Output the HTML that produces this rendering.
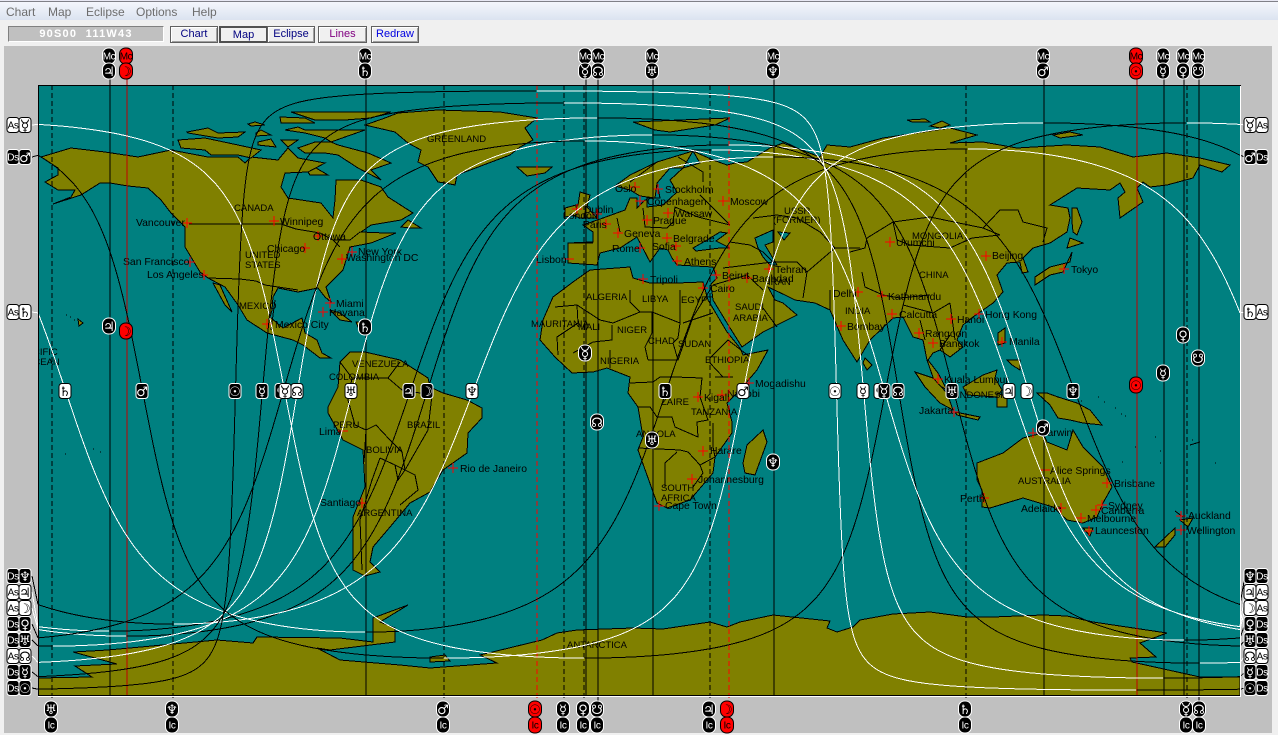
<!DOCTYPE html>
<html><head><meta charset="utf-8"><title>Map</title>
<style>
html,body{margin:0;padding:0;width:1278px;height:735px;overflow:hidden;background:#f0f0f0}
body{position:relative;font-family:"Liberation Sans",sans-serif}
#top{position:absolute;left:0;top:0;width:1278px;height:1px;background:#e8e8f4}
#top2{position:absolute;left:0;top:1px;width:1278px;height:1px;background:#808088}
#menu{position:absolute;left:0;top:2px;width:1278px;height:18px;background:linear-gradient(#f4f6fc,#dbe3f0)}
#menu span{position:absolute;top:3px;font-size:12px;color:#6d6d6d}
#coord{position:absolute;left:8px;top:26px;width:154px;height:14px;background:#c0c0c0;border:1px solid #808080;border-right-color:#fff;border-bottom-color:#fff;color:#fff;font-size:11px;font-weight:bold;line-height:14px;text-align:center;white-space:pre;letter-spacing:1.2px}
.btn{position:absolute;top:26px;height:15px;box-sizing:content-box;background:#f0f0f0;border:1px solid #606060;box-shadow:inset 1px 1px #fff,inset -1px -1px #a0a0a0;font-size:11px;line-height:15px;text-align:center;color:#000080}
#svg{position:absolute;left:0;top:0}
text{font-family:"Liberation Sans",sans-serif}
.c{font-size:10.4px;fill:#000}
.n{font-size:9.5px;fill:#000}
.land polygon{fill:#808000;stroke:#000;stroke-width:1;stroke-linejoin:miter}
.k text,.K text{fill:#fff}.w text,.W text{fill:#000}.r text{fill:#000}
.k path,.K path{stroke:#fff;fill:none}.w path,.W path,.r path{stroke:#000;fill:none}
.i text{font-family:"DejaVu Sans",sans-serif;font-size:13px;text-anchor:middle}
.i text.l{font-family:"Liberation Sans",sans-serif;font-size:10px;letter-spacing:-.4px}
.i text.p{font-size:11px}
</style></head><body>
<div id="top"></div><div id="top2"></div>
<div id="menu"><span style="left:6px">Chart</span><span style="left:48px">Map</span><span style="left:86px">Eclipse</span><span style="left:136px">Options</span><span style="left:192px">Help</span></div>
<svg id="svg" width="1278" height="735" viewBox="0 0 1278 735" xmlns="http://www.w3.org/2000/svg">
<defs>
<clipPath id="mc"><rect x="38" y="85" width="1202" height="611"/></clipPath>
<rect id="ok" x="-6.5" y="-8" width="13" height="16" rx="6" fill="#000" stroke="#fff"/>
<rect id="ow" x="-6.5" y="-8" width="13" height="16" rx="6" fill="#fff" stroke="#000"/>
<rect id="or" x="-6.5" y="-8" width="13" height="16" rx="6" fill="#f00" stroke="#000"/>
<rect id="bk" x="-6" y="-7.5" width="12" height="15" rx="3" fill="#000" stroke="#fff"/>
<rect id="bw" x="-6" y="-7.5" width="12" height="15" rx="3" fill="#fff" stroke="#000"/>
</defs>
<rect x="4" y="46" width="1268" height="687" fill="#c0c0c0"/>
<rect x="38" y="85" width="1202" height="611" fill="#008080"/>
<g clip-path="url(#mc)">
<g class="land" shape-rendering="crispEdges">
<!-- North America -->
<polygon points="41,157 71,148 105,152 138,157 171,150 208,157 238,157 245,163 251,157 278,160 288,148 298,158 325,163 308,172 285,173 281,187 288,198 321,203 333,218 335,200 336,180 361,180 381,187 388,197 413,213 401,220 371,225 361,232 385,233 396,233 371,243 350,247 343,270 331,282 326,287 331,302 325,297 318,288 298,292 278,288 273,297 272,310 270,317 283,328 302,318 305,333 317,340 322,353 331,358 320,358 303,345 293,340 267,333 247,320 238,305 225,287 208,278 200,272 185,247 185,227 171,213 161,200 148,188 128,186 110,183 100,183 81,195 53,204 71,197 75,190 58,190 45,182 58,175 58,168"/>
<polygon points="213,283 220,285 232,312 225,305"/>
<polygon points="178,140 205,138 238,145 261,150 251,158 238,155 211,155 205,150 181,148"/>
<polygon points="187,132 208,128 218,133 245,132 238,137 218,138 188,133"/>
<polygon points="248,124 255,122 265,125 251,126"/>
<polygon points="256,133 261,130 271,135 256,136"/>
<polygon points="258,142 271,139 276,147 258,145"/>
<polygon points="280,117 305,118 315,123 281,123"/>
<polygon points="291,112 391,112 371,118 345,120 315,120"/>
<polygon points="285,130 298,127 305,130 365,130 345,137 331,142 325,138 305,133"/>
<polygon points="281,140 298,140 288,147"/>
<polygon points="298,148 315,142 331,142 338,145 368,153 391,163 371,170 381,180 358,168 338,155 325,153 305,153"/>
<polygon points="308,172 316,168 328,175 310,175"/>
<polygon points="401,227 408,220 421,228 411,228"/>
<polygon points="330,310 340,313 352,322 340,320"/>
<polygon points="356,322 368,323 366,328 358,327"/>
<polygon points="78,319 83,323 79,326"/>
<!-- Greenland, Iceland, Svalbard -->
<polygon points="438,182 428,167 418,162 421,150 408,143 395,132 365,125 385,118 398,113 438,110 500,112 537,118 525,128 533,140 520,147 510,155 457,175 455,185 445,183"/>
<polygon points="517,167 552,167 545,173 527,176"/>
<polygon points="633,122 680,120 730,118 715,125 670,132 655,130"/>
<!-- South America -->
<polygon points="340,362 350,352 365,352 400,360 428,378 430,387 443,393 467,400 482,408 482,418 468,433 467,453 443,470 430,492 410,503 390,527 373,547 370,562 380,572 365,576 353,570 353,517 365,487 363,450 343,440 328,413 328,407 338,387"/>
<!-- Eurasia -->
<polygon points="568,243 593,242 593,232 583,225 603,218 625,210 630,198 637,198 637,208 645,200 655,198 660,198 657,183 670,168 683,168 700,163 693,151 713,160 727,165 735,163 747,162 770,148 783,143 820,157 827,145 850,147 883,138 950,128 977,135 950,143 983,142 1017,148 1067,145 1100,147 1133,157 1167,153 1200,158 1230,165 1222,172 1200,165 1193,178 1167,185 1150,187 1143,182 1137,188 1143,202 1120,218 1118,198 1125,192 1120,183 1110,190 1077,188 1050,205 1068,208 1070,218 1067,232 1050,243 1033,248 1023,258 1028,272 1022,273 1020,262 1007,263 997,275 1003,292 993,303 973,317 963,325 957,340 963,347 950,357 940,350 933,353 928,360 938,373 947,390 935,383 927,360 923,340 913,337 903,317 893,318 870,340 857,362 843,340 830,310 815,303 795,300 785,295 768,287 775,300 783,303 797,315 763,332 742,347 727,323 713,300 711,284 717,278 713,267 677,265 672,258 668,250 660,248 650,262 637,237 620,248 600,253 597,265 568,263"/>
<polygon points="615,186 630,175 657,162 693,151 683,168 670,168 657,183 655,198 640,196 630,190"/>
<!-- Africa -->
<polygon points="590,270 630,267 633,278 650,283 677,283 703,282 708,300 727,332 740,348 743,355 768,350 757,370 740,390 727,403 732,422 732,433 715,457 713,473 690,500 667,508 657,503 638,450 643,437 638,407 628,393 630,377 607,368 593,372 572,373 555,357 540,340 543,320 553,297 573,282"/>
<polygon points="763,430 767,442 755,475 745,473 743,463 747,445"/>
<!-- UK / Ireland -->
<polygon points="580,192 590,195 587,207 597,218 580,218 572,215 578,205"/>
<polygon points="565,208 576,205 577,215 565,217"/>
<!-- Seas -->
<polygon points="647,207 663,205 677,192 670,180 683,168 670,168 657,183 660,198 647,198" style="fill:#008080"/>
<polygon points="693,248 707,240 720,232 727,233 716,241 730,248 720,248 696,251" style="fill:#008080"/>
<polygon points="755,238 773,230 773,242 765,245 777,265 770,265 763,257 758,248" style="fill:#008080"/>
<polygon points="778,232 790,233 784,240" style="fill:#008080"/>
<!-- Asia islands -->
<polygon points="907,120 925,119 930,122 912,122"/>
<polygon points="930,126 942,121 950,125 940,128"/>
<polygon points="1053,135 1070,132 1083,135 1060,138"/>
<polygon points="1072,252 1070,262 1050,267 1035,277 1035,285 1050,275 1063,272"/>
<polygon points="1070,238 1083,243 1067,248"/>
<polygon points="1072,208 1077,208 1082,222 1077,235 1073,232 1072,222"/>
<polygon points="865,358 872,365 867,370 863,363"/>
<polygon points="915,372 933,378 947,393 953,410 940,403 925,387"/>
<polygon points="955,412 980,417 978,420 957,415"/>
<polygon points="963,387 983,375 997,370 995,378 1002,390 997,397 967,395"/>
<polygon points="997,393 1007,397 1007,407 997,407"/>
<polygon points="998,333 1005,328 1005,343 998,345"/>
<polygon points="1007,360 1020,360 1020,370 1012,365"/>
<polygon points="1037,393 1047,393 1058,397 1077,403 1090,410 1102,425 1083,423 1070,420 1058,418 1050,405"/>
<!-- Australia, NZ -->
<polygon points="977,463 1003,453 1023,438 1043,433 1047,442 1067,450 1073,430 1083,447 1103,467 1112,487 1103,503 1097,517 1083,523 1067,520 1053,507 1023,498 990,508 982,507 982,490 977,480"/>
<polygon points="1083,528 1093,528 1090,536"/>
<polygon points="1180,520 1193,518 1188,527"/>
<polygon points="1175,528 1175,535 1165,547 1155,547"/>
<!-- Antarctica -->
<polygon points="38,696 38,678 92,677 75,666 117,664 73,652 108,650 217,640 253,643 257,637 340,638 373,642 373,618 408,605 380,622 395,628 395,642 330,650 317,648 340,660 400,665 430,668 497,663 480,655 542,640 557,633 577,630 633,628 663,629 710,622 727,627 740,622 773,615 830,621 827,628 837,632 853,627 860,620 893,614 930,612 967,617 993,617 1043,615 1067,616 1093,622 1167,633 1140,643 1156,657 1130,658 1132,662 1200,677 1240,677 1240,696"/>
<polygon points="430,657 445,655 450,661 430,662"/>
</g>
<!-- Borders -->
<path shape-rendering="crispEdges" fill="none" stroke="#000" d="M189,224H281 M281,224L296,229 320,233 333,240 340,247 M333,240L350,240 360,232 M298,290L265,285 256,281 240,279 208,278 M275,300L271,330
M340,362L352,378 348,400 355,425 366,430 376,425 390,440 402,452 M366,430L364,462 M402,452L405,470 398,480 395,465 380,458 M400,362L388,378 402,390 432,395 M352,378L388,378 M380,458L372,480 360,520 362,570 M395,465L415,475 418,490 400,505 M432,395L428,430 405,470
M555,307L577,305 600,320 613,323 640,312 652,312 680,323 678,338 673,343 M630,290V302L640,312 M680,290V323 M652,312L652,333 645,347 648,360 M683,323L713,313 M577,305L578,323 557,337 558,355 M612,325V340L593,342 573,353 M610,350V368 M678,360L693,317 710,290 M630,383L653,382 660,377 675,377 702,378 700,397 708,420 697,422 698,437 675,427 672,417 657,417 650,407 638,407 M638,448L680,450 688,452 700,465 M713,423V447L715,457 700,465 703,473 M665,487V463L677,452 M693,487L703,473 M715,377L733,377 M710,363L723,377 M710,358L728,340 M728,340L750,357 M648,360L678,360 673,343
M893,222L930,217 983,228 1000,210 1018,210 1023,222 1047,228 1043,242 M867,238L893,222 897,240 910,245 950,248 972,238 1000,235 983,228 M867,238L865,248 850,252 M862,272L865,287 883,295 900,298 930,295 M903,305L933,313 950,303 M730,242L750,245 763,252 773,262 797,262 807,272 835,248 860,248 M753,218L777,215 797,218 820,232 835,248 M807,272L803,298 M713,285L747,275 763,290 M723,268L773,262 M830,290V310 M763,308L777,327
M643,208L645,227 667,228 673,222 675,207 698,217 730,225 M700,195L730,225 M678,157L703,172 703,182 M630,182L657,162 M617,218L620,232 M593,243H568 M920,320L925,340 M950,303L955,340 M940,350L950,335
M66,315h1M70,317h1M74,320h1M93,449h1M100,452h1M65,454h1M1081,401h1M1098,397h1M1104,402h1M1115,408h1M1121,414h1M1125,416h1M1155,437h1M1160,451h1M1135,447h1M1160,463h1M1192,440h1M1215,463h1M1122,462h1M1175,511L1183,517M1190,445L1200,442"/>
<!-- Crosses -->
<path shape-rendering="crispEdges" fill="none" stroke="#f00" d="M269,221h10M274,216v10 M300,248h10M305,243v10 M347,252h10M352,247v10 M337,259h10M342,254v10 M185,262h10M190,257v10 M313,236h10M318,231v10 M199,275h9M204,270v10 M183,223h9M187,218v10 M325,303h10M330,298v10 M318,312h10M323,307v10 M262,324h10M267,319v10 M338,431h10 M357,503h10M362,498v10 M448,468h10M453,463v10 M564,259h10 M572,209h10M577,204v10 M592,214h10M597,209v10 M601,224h10M606,219v10 M630,187h10M635,182v10 M653,189h10M658,184v10 M635,201h10M640,196v10 M663,213h10M668,208v10 M642,220h10M647,215v10 M613,233h10M618,228v10 M662,238h10M667,233v10 M635,248h10M640,243v10 M671,246h10M676,241v10 M672,261h10M677,256v10 M638,279h10M643,274v10 M718,201h10M723,196v10 M711,275h10M716,270v10 M742,278h10M747,273v10 M764,269h10M769,264v10 M698,288h10M703,283v10 M853,292h10M858,287v10 M885,242h10M890,237v10 M981,256h10M986,251v10 M1059,269h10M1064,264v10 M877,296h10M882,291v10 M887,314h10M892,309v10 M974,314h10M979,309v10 M946,319h10M951,314v10 M914,333h10M919,328v10 M928,343h10M933,338v10 M997,342h10M1002,337v10 M933,379h10M938,374v10 M949,412h10M954,407v10 M1028,433h10M1033,428v10 M1040,470h10 M979,498h10M984,493v10 M1102,483h10M1107,478v10 M1056,508h10M1061,503v10 M1097,505h10M1102,500v10 M1091,510h10M1096,505v10 M1076,518h10M1081,513v10 M1084,531h10M1089,526v10 M1176,516h10M1181,511v10 M1176,530h10M1181,525v10 M836,326h10M841,321v10 M717,395h10M722,390v10 M693,397h10M698,392v10 M744,383h10M749,378v10 M698,451h10M703,446v10 M687,479h10M692,474v10 M654,506h10M659,501v10"/>
<!-- Cities -->
<g class="c">
<text x="136" y="226">Vancouver</text><text x="280" y="225">Winnipeg</text><text x="313" y="240">Ottawa</text><text x="267" y="252">Chicago</text><text x="358" y="255">New York</text><text x="346" y="261">Washington DC</text><text x="123" y="265">San Francisco</text><text x="147" y="278">Los Angeles</text><text x="336" y="307">Miami</text><text x="329" y="316">Havana</text><text x="275" y="328">Mexico City</text><text x="319" y="435">Lima</text><text x="320" y="506">Santiago</text><text x="460" y="472">Rio de Janeiro</text><text x="536" y="263">Lisbon</text><text x="584" y="213">Dublin</text><text x="563" y="219">London</text><text x="583" y="228">Paris</text><text x="615" y="192">Oslo</text><text x="665" y="193">Stockholm</text><text x="647" y="205">Copenhagen</text><text x="675" y="217">Warsaw</text><text x="653" y="224">Prague</text><text x="624" y="237">Geneva</text><text x="673" y="242">Belgrade</text><text x="612" y="252">Rome</text><text x="652" y="250">Sofia</text><text x="684" y="265">Athens</text><text x="650" y="283">Tripoli</text><text x="730" y="205">Moscow</text><text x="722" y="279">Beirut</text><text x="752" y="282">Baghdad</text><text x="775" y="273">Tehran</text><text x="710" y="292">Cairo</text><text x="833" y="297">Delhi</text><text x="896" y="246">Urumchi</text><text x="992" y="259">Beijing</text><text x="1071" y="273">Tokyo</text><text x="888" y="300">Kathmandu</text><text x="899" y="318">Calcutta</text><text x="985" y="318">Hong Kong</text><text x="957" y="323">Hanoi</text><text x="925" y="337">Rangoon</text><text x="939" y="347">Bangkok</text><text x="1009" y="345">Manila</text><text x="944" y="383">Kuala Lumpur</text><text x="919" y="414">Jakarta</text><text x="1040" y="436">Darwin</text><text x="1050" y="474">Alice Springs</text><text x="960" y="502">Perth</text><text x="1114" y="487">Brisbane</text><text x="1021" y="512">Adelaide</text><text x="1108" y="509">Sydney</text><text x="1101" y="514">Canberra</text><text x="1087" y="522">Melbourne</text><text x="1095" y="534">Launceston</text><text x="1188" y="519">Auckland</text><text x="1187" y="534">Wellington</text><text x="847" y="330">Bombay</text><text x="727" y="397">Nairobi</text><text x="704" y="401">Kigali</text><text x="755" y="387">Mogadishu</text><text x="710" y="454">Harare</text><text x="698" y="483">Johannesburg</text><text x="665" y="509">Cape Town</text>
</g>
<g class="n">
<text x="427" y="142">GREENLAND</text><text x="234" y="211">CANADA</text><text x="245" y="258">UNITED</text><text x="245" y="268">STATES</text><text x="239" y="309">MEXICO</text><text x="21" y="355">PACIFIC</text><text x="26" y="365">OCEAN</text><text x="352" y="367">VENEZUELA</text><text x="329" y="380">COLOMBIA</text><text x="333" y="428">PERU</text><text x="366" y="453">BOLIVIA</text><text x="407" y="428">BRAZIL</text><text x="357" y="516">ARGENTINA</text><text x="586" y="300">ALGERIA</text><text x="642" y="302">LIBYA</text><text x="681" y="303">EGYPT</text><text x="735" y="310">SAUDI</text><text x="733" y="321">ARABIA</text><text x="531" y="327">MAURITANIA</text><text x="578" y="330">MALI</text><text x="617" y="333">NIGER</text><text x="648" y="344">CHAD</text><text x="678" y="347">SUDAN</text><text x="705" y="363">ETHIOPIA</text><text x="600" y="364">NIGERIA</text><text x="661" y="405">ZAIRE</text><text x="691" y="415">TANZANIA</text><text x="636" y="437">ANGOLA</text><text x="661" y="491">SOUTH</text><text x="661" y="501">AFRICA</text><text x="784" y="214">USSR</text><text x="773" y="223">(FORMER)</text><text x="768" y="285">IRAN</text><text x="845" y="314">INDIA</text><text x="912" y="239">MONGOLIA</text><text x="919" y="278">CHINA</text><text x="957" y="398">INDONESIA</text><text x="1018" y="484">AUSTRALIA</text><text x="567" y="648">ANTARCTICA</text>
</g>
</g>
<!-- Meridian lines -->
<path shape-rendering="crispEdges" fill="none" stroke="#000" d="M110,78V696M366,78V696M586,78V696M598,78V702M653,78V696M774,78V696M1044,78V696M1164,78V696M1184,78V696M1199,78V702"/>
<path shape-rendering="crispEdges" fill="none" stroke="#c00000" d="M127,78V696M1137,78V696"/>
<path shape-rendering="crispEdges" fill="none" stroke="#000" stroke-dasharray="5 3" d="M52,85V702M173,85V702M444,85V702M564,85V702M584,85V702M710,85V702M966,85V702M1187,85V702"/>
<path shape-rendering="crispEdges" fill="none" stroke="#f00" stroke-dasharray="5 3" d="M537,85V702M729,85V702"/>
<g id="curves" fill="none" shape-rendering="crispEdges" stroke-width="1"></g>
<rect x="38.5" y="85.5" width="1202" height="610" fill="none" stroke="#000"/>
<path shape-rendering="crispEdges" stroke="#fff" fill="none" d="M38,696.5H1241M1240.5,86V697"/>
<!-- Icons: MC top -->
<g class="i">
<g class="k" transform="translate(109,56)"><use href="#ok"/><text class="l" y="3.5">Mc</text></g><g class="k" transform="translate(109,71)"><use href="#ok"/><text y="5">♃</text></g>
<g class="r" transform="translate(126,56)"><use href="#or"/><text class="l" y="3.5">Mc</text></g><g class="r" transform="translate(126,71)"><use href="#or"/><text y="5">☽</text></g>
<g class="k" transform="translate(365,56)"><use href="#ok"/><text class="l" y="3.5">Mc</text></g><g class="k" transform="translate(365,71)"><use href="#ok"/><text y="5">♄</text></g>
<g class="k" transform="translate(585,56)"><use href="#ok"/><text class="l" y="3.5">Mc</text></g><g class="k" transform="translate(585,71)"><use href="#ok"/><text class="p" y="6">♀</text><path d="M-3.5-6a3.500 3.500 0 0 0 7 0"/></g>
<g class="k" transform="translate(598,56)"><use href="#ok"/><text class="l" y="3.5">Mc</text></g><g class="k" transform="translate(598,71)"><use href="#ok"/><text y="5">☊</text></g>
<g class="k" transform="translate(652,56)"><use href="#ok"/><text class="l" y="3.5">Mc</text></g><g class="k" transform="translate(652,71)"><use href="#ok"/><text y="5">♅</text></g>
<g class="k" transform="translate(773,56)"><use href="#ok"/><text class="l" y="3.5">Mc</text></g><g class="k" transform="translate(773,71)"><use href="#ok"/><text y="5">♆</text></g>
<g class="k" transform="translate(1043,56)"><use href="#ok"/><text class="l" y="3.5">Mc</text></g><g class="k" transform="translate(1043,71)"><use href="#ok"/><text y="5">♂</text></g>
<g class="r" transform="translate(1136,56)"><use href="#or"/><text class="l" y="3.5">Mc</text></g><g class="r" transform="translate(1136,71)"><use href="#or"/><text y="5">☉</text></g>
<g class="k" transform="translate(1163,56)"><use href="#ok"/><text class="l" y="3.5">Mc</text></g><g class="k" transform="translate(1163,71)"><use href="#ok"/><text y="5">☿</text></g>
<g class="k" transform="translate(1183,56)"><use href="#ok"/><text class="l" y="3.5">Mc</text></g><g class="k" transform="translate(1183,71)"><use href="#ok"/><text y="5">♀</text></g>
<g class="k" transform="translate(1198,56)"><use href="#ok"/><text class="l" y="3.5">Mc</text></g><g class="k" transform="translate(1198,71)"><use href="#ok"/><text y="5">☋</text></g>
<!-- IC bottom -->
<g class="k" transform="translate(51,709)"><use href="#ok"/><text y="5">♅</text></g><g class="k" transform="translate(51,725)"><use href="#ok"/><text class="l" y="3.5">Ic</text></g>
<g class="k" transform="translate(172,709)"><use href="#ok"/><text y="5">♆</text></g><g class="k" transform="translate(172,725)"><use href="#ok"/><text class="l" y="3.5">Ic</text></g>
<g class="k" transform="translate(443,709)"><use href="#ok"/><text y="5">♂</text></g><g class="k" transform="translate(443,725)"><use href="#ok"/><text class="l" y="3.5">Ic</text></g>
<g class="r" transform="translate(535,709)"><use href="#or"/><text y="5">☉</text></g><g class="r" transform="translate(535,725)"><use href="#or"/><text class="l" y="3.5">Ic</text></g>
<g class="k" transform="translate(563,709)"><use href="#ok"/><text y="5">☿</text></g><g class="k" transform="translate(563,725)"><use href="#ok"/><text class="l" y="3.5">Ic</text></g>
<g class="k" transform="translate(583,709)"><use href="#ok"/><text y="5">♀</text></g><g class="k" transform="translate(583,725)"><use href="#ok"/><text class="l" y="3.5">Ic</text></g>
<g class="k" transform="translate(597,709)"><use href="#ok"/><text y="5">☋</text></g><g class="k" transform="translate(597,725)"><use href="#ok"/><text class="l" y="3.5">Ic</text></g>
<g class="k" transform="translate(709,709)"><use href="#ok"/><text y="5">♃</text></g><g class="k" transform="translate(709,725)"><use href="#ok"/><text class="l" y="3.5">Ic</text></g>
<g class="r" transform="translate(727,709)"><use href="#or"/><text y="5">☽</text></g><g class="r" transform="translate(727,725)"><use href="#or"/><text class="l" y="3.5">Ic</text></g>
<g class="k" transform="translate(965,709)"><use href="#ok"/><text y="5">♄</text></g><g class="k" transform="translate(965,725)"><use href="#ok"/><text class="l" y="3.5">Ic</text></g>
<g class="k" transform="translate(1186,709)"><use href="#ok"/><text class="p" y="6">♀</text><path d="M-3.5-6a3.500 3.500 0 0 0 7 0"/></g><g class="k" transform="translate(1186,725)"><use href="#ok"/><text class="l" y="3.5">Ic</text></g>
<g class="k" transform="translate(1199,709)"><use href="#ok"/><text y="5">☊</text></g><g class="k" transform="translate(1199,725)"><use href="#ok"/><text class="l" y="3.5">Ic</text></g>
<!-- Left boxes -->
<g class="W" transform="translate(13,125)"><use href="#bw"/><text class="l" y="3.5">As</text></g><g class="W" transform="translate(25,125)"><use href="#bw"/><text class="p" y="5.5">♀</text><path d="M-3.5-5.500a3.500 3.500 0 0 0 7 0"/></g>
<g class="K" transform="translate(13,157)"><use href="#bk"/><text class="l" y="3.5">Ds</text></g><g class="K" transform="translate(25,157)"><use href="#bk"/><text y="5">♂</text></g>
<g class="W" transform="translate(13,312)"><use href="#bw"/><text class="l" y="3.5">As</text></g><g class="W" transform="translate(25,312)"><use href="#bw"/><text y="5">♄</text></g>
<g class="K" transform="translate(13,576)"><use href="#bk"/><text class="l" y="3.5">Ds</text></g><g class="K" transform="translate(25,576)"><use href="#bk"/><text y="5">♆</text></g>
<g class="W" transform="translate(13,592)"><use href="#bw"/><text class="l" y="3.5">As</text></g><g class="W" transform="translate(25,592)"><use href="#bw"/><text y="5">♃</text></g>
<g class="W" transform="translate(13,608)"><use href="#bw"/><text class="l" y="3.5">As</text></g><g class="W" transform="translate(25,608)"><use href="#bw"/><text y="5">☽</text></g>
<g class="K" transform="translate(13,624)"><use href="#bk"/><text class="l" y="3.5">Ds</text></g><g class="K" transform="translate(25,624)"><use href="#bk"/><text y="5">♀</text></g>
<g class="K" transform="translate(13,640)"><use href="#bk"/><text class="l" y="3.5">Ds</text></g><g class="K" transform="translate(25,640)"><use href="#bk"/><text y="5">♅</text></g>
<g class="W" transform="translate(13,656)"><use href="#bw"/><text class="l" y="3.5">As</text></g><g class="W" transform="translate(25,656)"><use href="#bw"/><text y="5">☊</text></g>
<g class="K" transform="translate(13,672)"><use href="#bk"/><text class="l" y="3.5">Ds</text></g><g class="K" transform="translate(25,672)"><use href="#bk"/><text y="5">☿</text></g>
<g class="K" transform="translate(13,688)"><use href="#bk"/><text class="l" y="3.5">Ds</text></g><g class="K" transform="translate(25,688)"><use href="#bk"/><text y="5">☉</text></g>
<!-- Right boxes -->
<g class="W" transform="translate(1250,125)"><use href="#bw"/><text class="p" y="5.5">♀</text><path d="M-3.5-5.500a3.500 3.500 0 0 0 7 0"/></g><g class="W" transform="translate(1262,125)"><use href="#bw"/><text class="l" y="3.5">As</text></g>
<g class="K" transform="translate(1250,157)"><use href="#bk"/><text y="5">♂</text></g><g class="K" transform="translate(1262,157)"><use href="#bk"/><text class="l" y="3.5">Ds</text></g>
<g class="W" transform="translate(1250,312)"><use href="#bw"/><text y="5">♄</text></g><g class="W" transform="translate(1262,312)"><use href="#bw"/><text class="l" y="3.5">As</text></g>
<g class="K" transform="translate(1250,576)"><use href="#bk"/><text y="5">♆</text></g><g class="K" transform="translate(1262,576)"><use href="#bk"/><text class="l" y="3.5">Ds</text></g>
<g class="W" transform="translate(1250,592)"><use href="#bw"/><text y="5">♃</text></g><g class="W" transform="translate(1262,592)"><use href="#bw"/><text class="l" y="3.5">As</text></g>
<g class="W" transform="translate(1250,608)"><use href="#bw"/><text y="5">☽</text></g><g class="W" transform="translate(1262,608)"><use href="#bw"/><text class="l" y="3.5">As</text></g>
<g class="K" transform="translate(1250,624)"><use href="#bk"/><text y="5">♀</text></g><g class="K" transform="translate(1262,624)"><use href="#bk"/><text class="l" y="3.5">Ds</text></g>
<g class="K" transform="translate(1250,640)"><use href="#bk"/><text y="5">♅</text></g><g class="K" transform="translate(1262,640)"><use href="#bk"/><text class="l" y="3.5">Ds</text></g>
<g class="W" transform="translate(1250,656)"><use href="#bw"/><text y="5">☊</text></g><g class="W" transform="translate(1262,656)"><use href="#bw"/><text class="l" y="3.5">As</text></g>
<g class="K" transform="translate(1250,672)"><use href="#bk"/><text y="5">☿</text></g><g class="K" transform="translate(1262,672)"><use href="#bk"/><text class="l" y="3.5">Ds</text></g>
<g class="K" transform="translate(1250,688)"><use href="#bk"/><text y="5">☉</text></g><g class="K" transform="translate(1262,688)"><use href="#bk"/><text class="l" y="3.5">Ds</text></g>
<!-- Equator row -->
<g class="W" transform="translate(65,391)"><use href="#bw"/><text y="5">♄</text></g>
<g class="K" transform="translate(142,391)"><use href="#bk"/><text y="5">♂</text></g>
<g class="K" transform="translate(235,391)"><use href="#bk"/><text y="5">☉</text></g>
<g class="K" transform="translate(262,391)"><use href="#bk"/><text y="5">☿</text></g>
<g class="K" transform="translate(281,391)"><use href="#bk"/><text y="5">♀</text></g>
<g class="W" transform="translate(285,391)"><use href="#bw"/><text class="p" y="5.5">♀</text><path d="M-3.5-5.500a3.500 3.500 0 0 0 7 0"/></g>
<g class="W" transform="translate(297,391)"><use href="#bw"/><text y="5">☊</text></g>
<g class="W" transform="translate(351,391)"><use href="#bw"/><text y="5">♅</text></g>
<g class="K" transform="translate(409,391)"><use href="#bk"/><text y="5">♃</text></g>
<g class="K" transform="translate(427,391)"><use href="#bk"/><text y="5">☽</text></g>
<g class="W" transform="translate(472,391)"><use href="#bw"/><text y="5">♆</text></g>
<g class="K" transform="translate(665,391)"><use href="#bk"/><text y="5">♄</text></g>
<g class="W" transform="translate(743,391)"><use href="#bw"/><text y="5">♂</text></g>
<g class="W" transform="translate(835,391)"><use href="#bw"/><text y="5">☉</text></g>
<g class="W" transform="translate(863,391)"><use href="#bw"/><text y="5">☿</text></g>
<g class="W" transform="translate(880,391)"><use href="#bw"/><text y="5">♀</text></g>
<g class="K" transform="translate(884,391)"><use href="#bk"/><text class="p" y="5.5">♀</text><path d="M-3.5-5.500a3.500 3.500 0 0 0 7 0"/></g>
<g class="K" transform="translate(898,391)"><use href="#bk"/><text y="5">☊</text></g>
<g class="K" transform="translate(952,391)"><use href="#bk"/><text y="5">♅</text></g>
<g class="W" transform="translate(1009,391)"><use href="#bw"/><text y="5">♃</text></g>
<g class="W" transform="translate(1027,391)"><use href="#bw"/><text y="5">☽</text></g>
<g class="K" transform="translate(1073,391)"><use href="#bk"/><text y="5">♆</text></g>
<!-- Sub-planet points -->
<g class="k" transform="translate(109,326)"><use href="#ok"/><text y="5">♃</text></g>
<g class="r" transform="translate(126,331)"><use href="#or"/><text y="5">☽</text></g>
<g class="k" transform="translate(365,327)"><use href="#ok"/><text y="5">♄</text></g>
<g class="k" transform="translate(585,353)"><use href="#ok"/><text class="p" y="6">♀</text><path d="M-3.5-6a3.500 3.500 0 0 0 7 0"/></g>
<g class="k" transform="translate(597,422)"><use href="#ok"/><text y="5">☊</text></g>
<g class="k" transform="translate(652,440)"><use href="#ok"/><text y="5">♅</text></g>
<g class="k" transform="translate(773,462)"><use href="#ok"/><text y="5">♆</text></g>
<g class="k" transform="translate(1043,428)"><use href="#ok"/><text y="5">♂</text></g>
<g class="r" transform="translate(1136,385)"><use href="#or"/><text y="5">☉</text></g>
<g class="k" transform="translate(1163,373)"><use href="#ok"/><text y="5">☿</text></g>
<g class="k" transform="translate(1183,335)"><use href="#ok"/><text y="5">♀</text></g>
<g class="k" transform="translate(1198,358)"><use href="#ok"/><text y="5">☋</text></g>
</g>
</svg>
<div id="coord">90S00  111W43</div>
<div class="btn" style="left:170px;width:46px">Chart</div>
<div class="btn" style="left:219px;width:45px;border:2px solid #505050;height:13px;line-height:14px;box-shadow:none">Map</div>
<div class="btn" style="left:267px;width:46px">Eclipse</div>
<div class="btn" style="left:318px;width:47px;color:#800080">Lines</div>
<div class="btn" style="left:371px;width:46px;color:#0000e0">Redraw</div>
<script>
(function(){
var g=document.getElementById('curves'),NS='http://www.w3.org/2000/svg';
// [MC x, sub-planet y, edge box y]
var P=[[110,326,592],[127,331,608],[366,327,312],[585,353,125],[598,423,656],[653,440,640],[774,462,576],[1044,428,157],[1137,385,688],[1164,373,672],[1185,335,624]];
function add(d,c){var p=document.createElementNS(NS,'path');p.setAttribute('d',d);p.setAttribute('stroke',c);g.appendChild(p);}
P.forEach(function(a){
 var m=a[0],d=(390.5-a[1])/3.39*Math.PI/180,segs={0:'',1:''},prev=null;
 function Y(x){var dx=(x-m)*2*Math.PI/1202;return 390.5-Math.atan(-Math.cos(dx)/Math.tan(d))*180/Math.PI*3.39;}
 for(var x=38;x<=1240;x++){
  var r=((x-m)%1202+1202)%1202,w=r>601?1:0,y=Y(x);
  if(prev!==w){segs[w]+='M'+x+' '+y.toFixed(1);prev=w;}else{segs[w]+='L'+x+' '+y.toFixed(1);}
 }
 add(segs[0],'#000');add(segs[1],'#fff');
 var cl=((38-m)%1202+1202)%1202>601?'#fff':'#000';
 add('M32 '+a[2]+'L38 '+Y(38).toFixed(1),cl);
 add('M1240 '+Y(1240).toFixed(1)+'L1245 '+a[2],cl);
});
})();
</script>
</body></html>
